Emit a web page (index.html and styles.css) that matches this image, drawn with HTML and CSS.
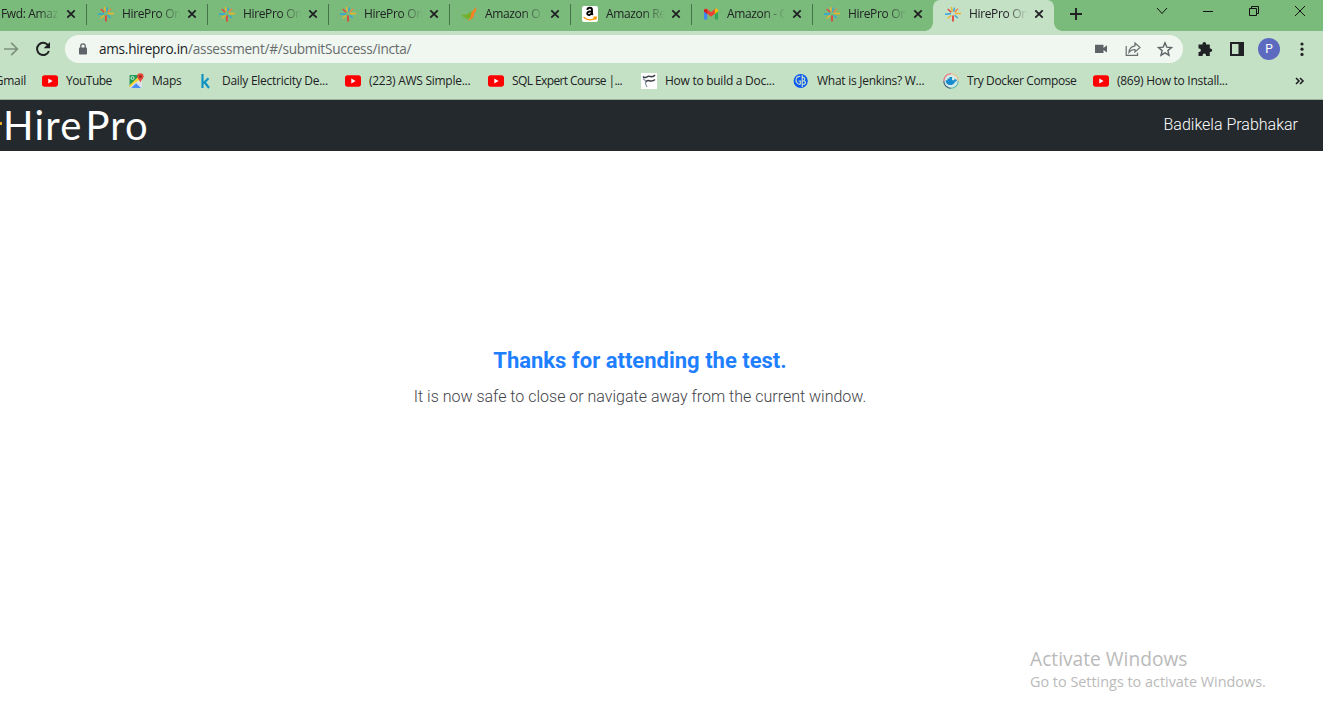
FILE: index.html
```
<!DOCTYPE html>
<html lang="en">
<head>
<meta charset="utf-8">
<title>HirePro Online Assessment</title>
<link rel="stylesheet" href="styles.css">
</head>
<body>
<svg class="defs" width="0" height="0">
  <symbol id="burst" viewBox="0 0 16 16">
    <g fill="none" stroke-width="1.4">
      <path stroke="#e2453f" stroke-width="1.800" d="M8 9.600V15.500"/>
      <path stroke="#f0b429" d="M9.800 7.500H16M7.300 5.600L6.400 1M2.600 12.200l3.600-2.700"/>
      <path stroke="#e2453f" d="M6.200 6.300L2.800 3"/>
      <path stroke="#e8844a" d="M9.600 6.200l3.400-3.400"/>
      <path stroke="#35a3dc" d="M0 8.300l6-.6M9.600 9.200l3.200 2.800M8.500 5.500L9.600 1.600"/>
    </g>
  </symbol>
  <symbol id="x" viewBox="0 0 10 10"><path d="M1.300 1.300l7.400 7.400M8.700 1.300L1.300 8.700" stroke="#202124" stroke-width="1.800"/></symbol>
  <symbol id="yt" viewBox="0 0 16 16"><rect y="2.200" width="16" height="11.500" rx="2.600" fill="#f00"/><path d="M6.300 5.500v4.900l4.300-2.400z" fill="#fff"/></symbol>
</svg>

<div class="tabs">
  <div class="tab first"><span class="name">Fwd: Amaz</span><svg class="close"><use href="#x"/></svg></div>
  <div class="tab"><svg class="ico"><use href="#burst"/></svg><span class="name">HirePro On</span><svg class="close"><use href="#x"/></svg></div>
  <div class="tab"><svg class="ico"><use href="#burst"/></svg><span class="name">HirePro On</span><svg class="close"><use href="#x"/></svg></div>
  <div class="tab"><svg class="ico"><use href="#burst"/></svg><span class="name">HirePro On</span><svg class="close"><use href="#x"/></svg></div>
  <div class="tab"><svg class="ico" viewBox="0 0 16 16"><path d="M.3 8.500c3.500 1 6 0 10.700-3.500l-.5 4c-1 3.500-3.500 5-6.500 3.500l1.500-.8C3 11.500 1.500 10.500.3 8.500z" fill="#76b02a"/><path d="M15 1c.8 3.500-.2 5-2 6.500 1 2-2 6.500-6.500 7.500 2.500-2 3-4 3.500-6.500C10.500 5 13 4 15 1z" fill="#f58220"/></svg><span class="name">Amazon O</span><svg class="close"><use href="#x"/></svg></div>
  <div class="tab"><svg class="ico" viewBox="0 0 16 16"><rect width="16" height="16" rx="2" fill="#fff"/><path d="M5.300 3.800C5.800 1 10 1.200 10 3.700v4.100l.8 1.100M9.800 5.300c-3-.1-4.700.6-4.600 2.300.2 2.200 4 1.600 4.500-.7" fill="none" stroke="#000" stroke-width="1.900"/><path d="M1.600 11.300c3.800 3.200 8.600 3.200 12 .5M11.500 11.300l2.700-.1-.7 2.500" fill="none" stroke="#ff9900" stroke-width="1.500"/></svg><span class="name">Amazon Re</span><svg class="close"><use href="#x"/></svg></div>
  <div class="tab"><svg class="ico" viewBox="0 0 16 16"><path d="M1 4v9.500h3.200V6z" fill="#4285f4"/><path d="M15 4v9.500h-3.200V6z" fill="#34a853"/><path d="M1 3.200L3.500 2.500 8 6.200l4.500-3.700V7.300L8 10.800 4 7.600 1 5.500z" fill="#ea4335"/><path d="M1 3.500v2l3.200 2.400V4z" fill="#c5221f"/><path d="M15 3.500v2l-3.200 2.400V3.500L13.500 2.500z" fill="#fbbc04"/></svg><span class="name">Amazon - O</span><svg class="close"><use href="#x"/></svg></div>
  <div class="tab last"><svg class="ico"><use href="#burst"/></svg><span class="name">HirePro On</span><svg class="close"><use href="#x"/></svg></div>
  <div class="tab active"><svg class="ico"><use href="#burst"/></svg><span class="name">HirePro On</span><svg class="close"><use href="#x"/></svg></div>
  <svg class="plus" viewBox="0 0 12 12"><path d="M6 0v12M0 6h12" stroke="#202124" stroke-width="1.900"/></svg>
  <div class="window-buttons">
    <svg viewBox="0 0 12 12"><path d="M1 3l5 5.500L11 3"/></svg>
    <svg viewBox="0 0 12 12"><path d="M1 6.500h10"/></svg>
    <svg viewBox="0 0 12 12"><path d="M1.500 3.500h7v7h-7zM3.500 3.500v-2h7v7h-2"/></svg>
    <svg viewBox="0 0 12 12"><path d="M1 1l10 10M11 1L1 11"/></svg>
  </div>
</div>

<div class="toolbar">
  <svg class="forward" viewBox="0 0 16 16"><path d="M1 8h13M8.200 1.800L14.400 8l-6.200 6.200" fill="none" stroke="#7d917e" stroke-width="1.700"/></svg>
  <svg class="reload" viewBox="0 0 16 16"><path d="M13.200 4.500A6.100 6.100 0 1 0 13.900 10" fill="none" stroke="#202124" stroke-width="2"/><path d="M15 1v6.300H8.700z" fill="#202124"/></svg>
  <div class="address">
    <svg class="lock" viewBox="0 0 10 12"><rect x="1" y="4.500" width="8" height="7" rx=".8" fill="#5f6368"/><path d="M2.800 5V3a2.200 2.200 0 0 1 4.400 0v2" fill="none" stroke="#5f6368" stroke-width="1.300"/></svg>
    <div class="url"><span class="host">ams.hirepro.in</span>/assessment/#/submitSuccess/incta/</div>
    <svg class="a-ico" viewBox="0 0 16 16"><path d="M2 3.700h8.500v8.300H2zM10.500 7L14 4.200v7.400l-3.500-2.700z" fill="#5f6368"/></svg>
    <svg class="a-ico" viewBox="0 0 16 16"><path d="M1.200 5v9.300h11.300v-2.500" fill="none" stroke="#6a6e71" stroke-width="1.200"/><path d="M10 2l5 4.500-5 4.500V8.500c-2.500-.1-4.500.8-6 2.800.3-3.500 2.500-6 6-6.500z" fill="none" stroke="#6a6e71" stroke-width="1.200"/></svg>
    <svg class="a-ico" viewBox="0 0 16 16"><path d="M8 1.800l1.800 4.300 4.700.4-3.600 3.100 1.100 4.600L8 11.800l-4 2.400 1.100-4.600-3.600-3.100 4.700-.4z" fill="none" stroke="#5f6368" stroke-width="1.400"/></svg>
  </div>
  <svg class="t-ico" viewBox="0 0 16 16"><path d="M1.500 3.600h4V2.800a1.800 1.800 0 0 1 3.600 0v.8h3.700v3.900h.6a1.800 1.800 0 0 1 0 3.600h-.6v3.800H9v-.7a1.700 1.700 0 0 0-3.400 0v.7H1.500V11h.7a1.700 1.700 0 0 0 0-3.400h-.7z" fill="#202124"/></svg>
  <svg class="t-ico" viewBox="0 0 16 16"><path d="M1 1h14v14H1z" fill="#202124"/><path d="M3 3h6.500v10H3z" fill="#c5e1c5"/></svg>
  <div class="avatar">P</div>
  <svg class="t-ico" viewBox="0 0 16 16"><g fill="#202124"><circle cx="8" cy="3" r="1.600"/><circle cx="8" cy="8.200" r="1.600"/><circle cx="8" cy="13.400" r="1.600"/></g></svg>
</div>

<div class="bookmarks">
  <div class="bm gmail"><span>Gmail</span></div>
  <div class="bm"><svg><use href="#yt"/></svg><span class="w-youtube">YouTube</span></div>
  <div class="bm"><svg viewBox="0 0 16 16"><rect x="1.500" y="2" width="12.500" height="13" rx="1" fill="#dfe2e3"/><path d="M1.500 3a1 1 0 0 1 1-1H10l1.500 4-10 8z" fill="#1e9e57"/><path d="M2 15l6-6 6 6z" fill="#4c8df6"/><path d="M1.500 14.800v-2.500l8-7.800 2 2.200z" fill="#fcd23c"/><path d="M2.500 15L8 9.500l5.500 5.500" fill="none" stroke="#fff" stroke-width="1"/><circle cx="4.500" cy="5" r="1.500" fill="none" stroke="#d8efe0"/><path d="M12.400.3a3.200 3.200 0 0 1 3.200 3.300c0 2.400-2.400 3-3.200 6.200-.8-3.200-3.200-3.800-3.200-6.200A3.200 3.200 0 0 1 12.400.3z" fill="#e34a3c"/><circle cx="12.400" cy="3.500" r="1.200" fill="#8f2119"/></svg><span>Maps</span></div>
  <div class="bm"><svg viewBox="0 0 16 16"><path d="M4.500 1v14M10.500 5.300L5.500 10.200M6.500 9L11 15" fill="none" stroke="#1094c2" stroke-width="2.200"/></svg><span class="w-daily">Daily Electricity De...</span></div>
  <div class="bm"><svg><use href="#yt"/></svg><span class="w-aws">(223) AWS Simple...</span></div>
  <div class="bm"><svg><use href="#yt"/></svg><span class="w-sql">SQL Expert Course |...</span></div>
  <div class="bm"><svg viewBox="0 0 16 16"><path d="M0 0h16v16H0z" fill="#fff"/><path d="M2 3.500c2 3 3.500-.5 6-.3s3.500 2 6-1.200M4.500 9.500c1.500-3 3-1.800 5-1.500s3 0 4.500-1.500" fill="none" stroke="#3c4146" stroke-width="1.500"/><path d="M2 5.500l2.500 2.200v3L6 14" fill="none" stroke="#8793a5" stroke-width="1.200"/></svg><span class="w-how">How to build a Doc...</span></div>
  <div class="bm"><svg viewBox="0 0 16 16"><circle cx="7.700" cy="8" r="7.100" fill="#0b57f3"/><path d="M7.300 3.500C3 3 2.200 7 3.800 9.500c1 1.600 2.700 2 3.500 1.500V8H5.500M9.200 2v12M9.200 4.500c2.800-.8 3.300 2.500 1.300 3.500H9.200M11 8c2.500.5 2 3.800-1.800 3.500" fill="none" stroke="#c5e1c5" stroke-width="1.200"/></svg><span class="w-what">What is Jenkins? W...</span></div>
  <div class="bm"><svg viewBox="0 0 16 16"><circle cx="8" cy="8" r="7.300" fill="#d5e9e6"/><g fill="none" stroke-width="1.100"><path d="M.8 8A7.200 7.200 0 0 1 8 .8" stroke="#ed6878"/><path d="M8 .8A7.200 7.200 0 0 1 15.200 8" stroke="#f1bd7b"/><path d="M15.200 8A7.200 7.200 0 0 1 8 15.200" stroke="#5ab9a8"/><path d="M8 15.200A7.200 7.200 0 0 1 .8 8" stroke="#365a78"/></g><path d="M2.500 7.200h2V5.500h2V4h2.500v3.200h2.200l.5-1.700 1.200 1.300h1.300c-.5 1.400-1.100 1.700-2.200 1.900-1.500 4.500-8.900 5-9.500-1.500z" fill="#168bd0"/></svg><span class="w-docker">Try Docker Compose</span></div>
  <div class="bm"><svg><use href="#yt"/></svg><span class="w-install">(869) How to Install...</span></div>
  <svg class="more" viewBox="0 0 10 8"><path d="M1 1l3 3-3 3M5 1l3 3-3 3" fill="none" stroke="#202124" stroke-width="1.600"/></svg>
</div>

<header class="site">
  <div class="brand"><i class="spark"></i><span class="hire">Hire</span><span class="pro">Pro</span></div>
  <div class="user">Badikela Prabhakar</div>
</header>

<main>
  <h1>Thanks for attending the test.</h1>
  <p>It is now safe to close or navigate away from the current window.</p>
</main>

<aside class="activate">
  <div class="act-title">Activate Windows</div>
  <div class="act-sub">Go to Settings to activate Windows.</div>
</aside>
</body>
</html>
```
FILE: styles.css
```
* { box-sizing: border-box; }
body {
  margin: 0;
  height: 711px;
  overflow: hidden;
  background: #fff;
  font-family: "Open Sans", "Noto Sans", sans-serif;
  color: #202124;
}
svg { display: block; flex: none; }
.defs { position: absolute; }

.tabs {
  display: flex;
  height: 31px;
  background: #7abb7b;
}
.tab {
  position: relative;
  display: flex;
  flex: none;
  width: 121px;
  height: 28px;
  padding-left: 12px;
  align-items: center;
}
.tab.first { width: 86px; padding-left: 1px; }
.tab:not(.last):not(.active)::after {
  content: "";
  position: absolute;
  right: -1px;
  top: 4px;
  width: 1px;
  height: 21px;
  background: #47734a;
}
.tab.active {
  height: 31px;
  padding-bottom: 3px;
  background: #c5e1c5;
  border-radius: 7px 7px 0 0;
}
.tab.active::before, .tab.active::after {
  content: "";
  position: absolute;
  bottom: 0;
  width: 8px;
  height: 8px;
}
.tab.active::before { left: -8px; background: radial-gradient(circle at 0 0, #7abb7b 7.5px, #c5e1c5 8px); }
.tab.active::after { right: -8px; background: radial-gradient(circle at 100% 0, #7abb7b 7.5px, #c5e1c5 8px); }
.ico { width: 16px; height: 16px; margin-right: 8px; }
.name {
  width: 59px;
  white-space: nowrap;
  font-size: 12px;
  letter-spacing: -.35px;
  line-height: 18px;
  -webkit-mask-image: linear-gradient(90deg, #000 62%, transparent 100%);
  mask-image: linear-gradient(90deg, #000 62%, transparent 100%);
}
.close { width: 10px; height: 10px; margin-left: 6px; }
.plus { width: 12px; height: 12px; margin: 8px 0 0 16px; }
.window-buttons {
  display: flex;
  gap: 34px;
  margin: 5px 17px 0 auto;
}
.window-buttons svg { width: 12px; height: 12px; fill: none; stroke: #111; }

.toolbar {
  display: flex;
  align-items: center;
  height: 36px;
  padding: 0 14px 0 3px;
  background: #c5e1c5;
}
.forward { width: 16px; height: 16px; }
.reload { width: 16px; height: 16px; margin: 0 14px 0 16px; }
.address {
  display: flex;
  flex: none;
  align-items: center;
  width: 1118px;
  height: 28px;
  padding: 0 10px 0 13px;
  gap: 16px;
  background: #f0f7f0;
  border-radius: 14px;
}
.lock { width: 10px; height: 12px; margin-right: -5px; }
.url { flex: 1; font-size: 13.6px; letter-spacing: -.26px; line-height: 20px; color: #676b6d; white-space: nowrap; }
.host { color: #202124; }
.a-ico, .t-ico { width: 16px; height: 16px; }
.toolbar > .t-ico { margin-left: 14px; }
.toolbar > .t-ico + .t-ico { margin-left: 16px; }
.avatar {
  flex: none;
  width: 22px;
  height: 22px;
  margin-left: 13px;
  border-radius: 50%;
  background: #5c6bc0;
  color: #fff;
  font: 12px/22px Roboto, sans-serif;
  text-align: center;
}

.bookmarks {
  display: grid;
  grid-template-columns: 42px 86px 70px 147px 143px 153px 152px 150px 150px 150px 1fr;
  align-items: center;
  height: 33px;
  padding-bottom: 5px;
  background: #c5e1c5;
  border-bottom: 1px solid #9bb19b;
}
.bm {
  display: flex;
  align-items: center;
  gap: 8px;
  font-size: 12px;
  letter-spacing: -.27px;
  line-height: 18px;
  white-space: nowrap;
}
.bm svg { width: 16px; height: 16px; }
.gmail { justify-content: flex-end; padding-right: 16px; }
.w-youtube { letter-spacing: -.5px; }
.w-sql { letter-spacing: -.6px; }
.w-docker { letter-spacing: -.38px; }
.more { width: 10px; height: 8px; margin-left: 52px; }

.site {
  display: flex;
  justify-content: space-between;
  height: 51px;
  background: #24292d;
  color: #fff;
}
.brand { display: flex; font: 40px/50px Lato, sans-serif; }
.spark { width: 2px; height: 3px; margin: 22px 1px 0 0; background: #e8a822; }
.hire { letter-spacing: 1.2px; }
.pro { margin-left: 3px; letter-spacing: 1px; }
.user { padding-right: 25px; font: 300 16px/49px Roboto, sans-serif; }

main {
  width: 1280px;
  padding-top: 195px;
  font-family: Roboto, sans-serif;
  text-align: center;
}
h1 { margin: 0; font-size: 22px; line-height: 30px; font-weight: 700; color: #1f80ff; }
p { margin: 9px 0 0; font-size: 16px; line-height: 24px; font-weight: 300; color: #3f4449; }

.activate {
  position: absolute;
  left: 1030px;
  top: 646px;
  color: #bababa;
  white-space: nowrap;
}
.act-title { font-size: 19.2px; line-height: 26px; }
.act-sub { font-size: 14.4px; line-height: 20px; }
```
